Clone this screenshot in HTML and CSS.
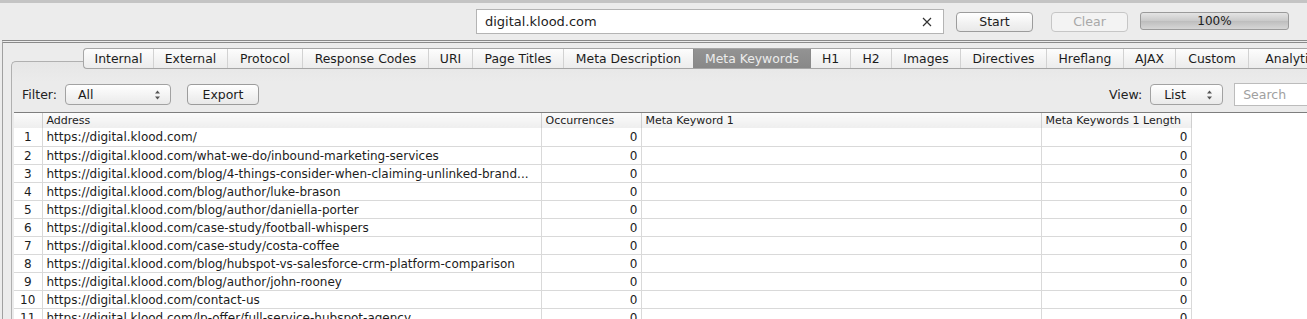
FILE: index.html
```html
<!DOCTYPE html>
<html lang="en">
<head>
<meta charset="UTF-8">
<title>Meta Keywords</title>
<link rel="stylesheet" href="styles.css">
</head>
<body>

<header class="topbar">
  <div class="url">
    <span>digital.klood.com</span>
    <svg class="url-x" width="10" height="10" viewBox="0 0 10 10"><path d="M1 1L9 9M9 1L1 9" stroke="#333" stroke-width="1.2"/></svg>
  </div>
  <button class="btn btn-start">Start</button>
  <button class="btn btn-clear" disabled>Clear</button>
  <div class="progress">100%</div>
</header>

<div class="frame">
  <nav class="tabs">
    <div class="tab">Internal</div>
    <div class="tab">External</div>
    <div class="tab">Protocol</div>
    <div class="tab">Response Codes</div>
    <div class="tab">URI</div>
    <div class="tab">Page Titles</div>
    <div class="tab">Meta Description</div>
    <div class="tab selected">Meta Keywords</div>
    <div class="tab after-sel">H1</div>
    <div class="tab">H2</div>
    <div class="tab">Images</div>
    <div class="tab">Directives</div>
    <div class="tab">Hreflang</div>
    <div class="tab">AJAX</div>
    <div class="tab">Custom</div>
    <div class="tab">Analytics</div>
  </nav>

  <div class="pane">
    <div class="toolbar">
      <span class="label">Filter:</span>
      <div class="select select-filter">All
        <svg class="arrows" width="7" height="10" viewBox="0 0 7 10"><path d="M3.5 0.5L6 3.5H1Z M3.5 9.5L6 6.5H1Z" fill="#555"/></svg>
      </div>
      <button class="btn btn-export">Export</button>
      <span class="label label-view">View:</span>
      <div class="select select-view">List
        <svg class="arrows" width="7" height="10" viewBox="0 0 7 10"><path d="M3.5 0.5L6 3.5H1Z M3.5 9.5L6 6.5H1Z" fill="#555"/></svg>
      </div>
      <div class="search">Search</div>
    </div>

    <div class="grid">
      <table>
        <colgroup>
          <col class="c-num"><col class="c-addr"><col class="c-occ"><col class="c-kw"><col class="c-len">
        </colgroup>
        <thead>
          <tr><th></th><th>Address</th><th>Occurrences</th><th>Meta Keyword 1</th><th>Meta Keywords 1 Length</th></tr>
        </thead>
        <tbody>
          <tr><td class="num">1</td><td>https://digital.klood.com/</td><td class="n">0</td><td></td><td class="n">0</td></tr>
          <tr><td class="num">2</td><td>https://digital.klood.com/what-we-do/inbound-marketing-services</td><td class="n">0</td><td></td><td class="n">0</td></tr>
          <tr><td class="num">3</td><td>https://digital.klood.com/blog/4-things-consider-when-claiming-unlinked-brand...</td><td class="n">0</td><td></td><td class="n">0</td></tr>
          <tr><td class="num">4</td><td>https://digital.klood.com/blog/author/luke-brason</td><td class="n">0</td><td></td><td class="n">0</td></tr>
          <tr><td class="num">5</td><td>https://digital.klood.com/blog/author/daniella-porter</td><td class="n">0</td><td></td><td class="n">0</td></tr>
          <tr><td class="num">6</td><td>https://digital.klood.com/case-study/football-whispers</td><td class="n">0</td><td></td><td class="n">0</td></tr>
          <tr><td class="num">7</td><td>https://digital.klood.com/case-study/costa-coffee</td><td class="n">0</td><td></td><td class="n">0</td></tr>
          <tr><td class="num">8</td><td>https://digital.klood.com/blog/hubspot-vs-salesforce-crm-platform-comparison</td><td class="n">0</td><td></td><td class="n">0</td></tr>
          <tr><td class="num">9</td><td>https://digital.klood.com/blog/author/john-rooney</td><td class="n">0</td><td></td><td class="n">0</td></tr>
          <tr><td class="num">10</td><td>https://digital.klood.com/contact-us</td><td class="n">0</td><td></td><td class="n">0</td></tr>
          <tr><td class="num">11</td><td>https://digital.klood.com/lp-offer/full-service-hubspot-agency</td><td class="n">0</td><td></td><td class="n">0</td></tr>
        </tbody>
      </table>
    </div>
  </div>
</div>

</body>
</html>
```

FILE: styles.css
```css
* {margin: 0; padding: 0; box-sizing: border-box;}
body {
  width: 1307px; height: 319px; overflow: hidden;
  background: #ececec; color: #1c1c1c;
  font-family: "DejaVu Sans", sans-serif; font-size: 12px;
}

/* top bar */
.topbar {display: flex; align-items: center; height: 40px; border-top: 3px solid #c4c4c4; padding-left: 476px;}
.topbar > * {flex-shrink: 0;}
.url {
  display: flex; align-items: center; justify-content: space-between;
  width: 468px; height: 25px; padding: 0 11px 0 8px;
  background: #fff; border: 1px solid #b4b4b4; font-size: 13px;
}
.btn {
  height: 20px; border: 1px solid #9c9c9c; border-radius: 4px;
  background: linear-gradient(#ffffff, #f1f1f1 60%, #e9e9e9);
  font-family: inherit; font-size: 12.5px; color: #1c1c1c;
}
.btn-start {width: 77px; margin-left: 12px;}
.btn-clear {width: 77px; margin-left: 18px; color: #a8a8a8; border-color: #c6c6c6; background: #f3f3f3;}
.progress {
  width: 149px; height: 18px; margin-left: 12px; margin-top: -1px;
  border: 1px solid #9a9a9a; border-radius: 3px;
  background: linear-gradient(#e4e4e4, #c9c9c9 50%, #bdbdbd 51%, #d6d6d6);
  text-align: center; line-height: 16px; font-size: 12px;
}

/* frame + tabs */
.frame {margin-left: 2px; border-top: 3px double #8a8a8a; border-left: 1px solid #a0a0a0; height: 300px;}
.tabs {
  position: relative; z-index: 1;
  display: grid; grid-template-columns: 69px 74px 75px 126px 44px 91px 130px 117px 40px 41px 69px 86px 77px 52px 73px 90px;
  margin: 5px 0 0 80px; height: 21px; width: max-content;
  border: 1px solid #a6a6a6; border-right: none; border-radius: 4px 0 0 4px;
  background: linear-gradient(#fdfdfd, #f3f3f3 55%, #ececec);
}
.tab {border-left: 1px solid #d2d2d2; text-align: center; line-height: 19px; font-size: 12.4px; white-space: nowrap; overflow: hidden;}
.tab:first-child {border-left: none;}
.tab.selected {background: linear-gradient(#939393, #888888); color: #ececec; border-left-color: #8a8a8a;}
.tab.after-sel {border-left-color: #8a8a8a;}

.pane {
  margin: -8px 0 0 8px; height: 300px; padding: 21px 0 0 2px;
  border: 1px solid #b0b0b0; border-right: none; border-radius: 5px 0 0 0;
  background: linear-gradient(#e6e6e6, #ebebeb 20px);
}

/* filter row */
.toolbar {display: flex; align-items: center; height: 22px; margin-bottom: 7px; padding-left: 8px; font-size: 12.5px;}
.toolbar > * {flex-shrink: 0;}
.label {color: #222;}
.select {
  position: relative; height: 21px; margin-left: 8px; padding-left: 12px;
  border: 1px solid #a2a2a2; border-radius: 4px;
  background: linear-gradient(#ffffff, #f2f2f2 60%, #eaeaea);
  line-height: 19px;
}
.select .arrows {position: absolute; right: 9px; top: 5px;}
.select-filter {width: 106px;}
.btn-export {width: 72px; height: 21px; margin-left: 16px;}
.label-view {margin-left: 850px;}
.select-view {width: 73px; margin-left: 8px; padding-left: 13px;}
.search {
  width: 90px; height: 23px; margin-left: 11px; padding-left: 8px;
  background: #fff; border: 1px solid #bcbcbc; color: #a0a0a0; line-height: 21px;
}

/* table */
.grid {background: #fff; border-top: 1px solid #7e7e7e; height: 220px;}
table {border-collapse: collapse; table-layout: fixed; width: 1177px;}
.c-num {width: 28px;} .c-addr {width: 499px;} .c-occ {width: 100px;} .c-kw {width: 400px;} .c-len {width: 150px;}
th {
  height: 15px; padding: 0 4px; text-align: left; font-weight: normal; font-size: 11px; line-height: 15px;
  background: linear-gradient(#fbfbfb, #eeeeee); border-right: 1px solid #cfcfcf;
  white-space: nowrap; overflow: hidden;
}
td {
  height: 18px; padding: 2px 4px 0; border-right: 1px solid #d9d9d9; border-bottom: 1px solid #d9d9d9;
  line-height: 15px; white-space: nowrap; overflow: hidden;
}
td.num {text-align: center; padding-left: 0; padding-right: 0;}
td.n {text-align: right; padding-right: 3px;}
```
